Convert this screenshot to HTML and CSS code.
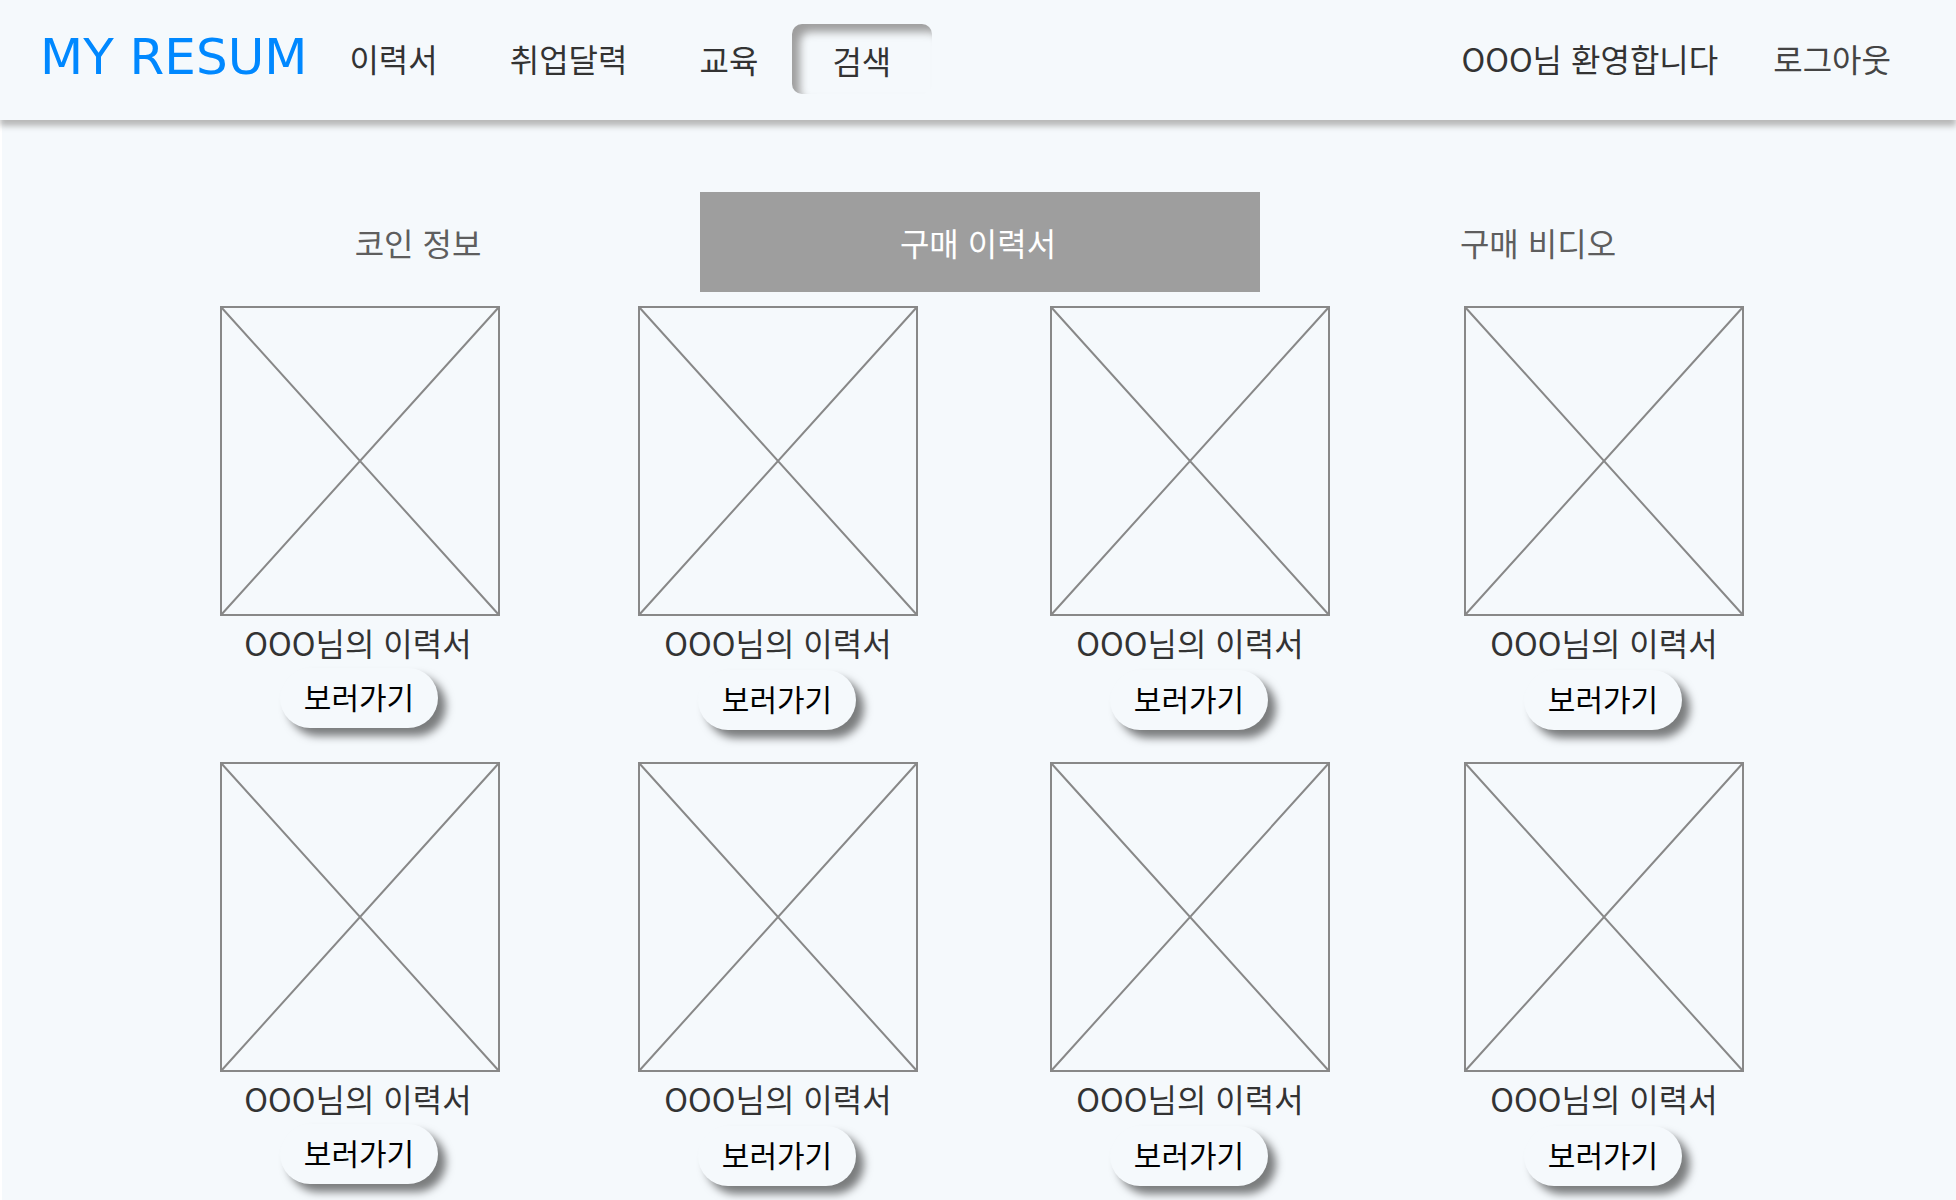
FILE: index.html
```html
<!DOCTYPE html>
<html lang="ko">
<head>
<meta charset="utf-8">
<title>MY RESUM</title>
<link rel="stylesheet" href="styles.css">
</head>
<body>
<header class="header">
  <a class="logo" href="#">MY RESUM</a>
  <nav class="menu">
    <a href="#">이력서</a>
    <a href="#">취업달력</a>
    <a class="lower" href="#">교육</a>
    <a class="lower pressed" href="#">검색</a>
  </nav>
  <div class="account">
    <span>OOO님 환영합니다</span>
    <a class="logout" href="#">로그아웃</a>
  </div>
</header>
<main class="page">
  <nav class="tabs">
    <a href="#">코인 정보</a>
    <a class="active" href="#" aria-current="page">구매 이력서</a>
    <a href="#">구매 비디오</a>
  </nav>
  <section class="cards">
    <article class="card first">
      <svg class="thumb" viewBox="0 0 280 310" aria-hidden="true"><rect x="1" y="1" width="278" height="308"/><path d="M1 1L279 309M279 1L1 309"/></svg>
      <h2>OOO님의 이력서</h2>
      <button type="button">보러가기</button>
    </article>
    <article class="card">
      <svg class="thumb" viewBox="0 0 280 310" aria-hidden="true"><rect x="1" y="1" width="278" height="308"/><path d="M1 1L279 309M279 1L1 309"/></svg>
      <h2>OOO님의 이력서</h2>
      <button type="button">보러가기</button>
    </article>
    <article class="card">
      <svg class="thumb" viewBox="0 0 280 310" aria-hidden="true"><rect x="1" y="1" width="278" height="308"/><path d="M1 1L279 309M279 1L1 309"/></svg>
      <h2>OOO님의 이력서</h2>
      <button type="button">보러가기</button>
    </article>
    <article class="card">
      <svg class="thumb" viewBox="0 0 280 310" aria-hidden="true"><rect x="1" y="1" width="278" height="308"/><path d="M1 1L279 309M279 1L1 309"/></svg>
      <h2>OOO님의 이력서</h2>
      <button type="button">보러가기</button>
    </article>
    <article class="card first">
      <svg class="thumb" viewBox="0 0 280 310" aria-hidden="true"><rect x="1" y="1" width="278" height="308"/><path d="M1 1L279 309M279 1L1 309"/></svg>
      <h2>OOO님의 이력서</h2>
      <button type="button">보러가기</button>
    </article>
    <article class="card">
      <svg class="thumb" viewBox="0 0 280 310" aria-hidden="true"><rect x="1" y="1" width="278" height="308"/><path d="M1 1L279 309M279 1L1 309"/></svg>
      <h2>OOO님의 이력서</h2>
      <button type="button">보러가기</button>
    </article>
    <article class="card">
      <svg class="thumb" viewBox="0 0 280 310" aria-hidden="true"><rect x="1" y="1" width="278" height="308"/><path d="M1 1L279 309M279 1L1 309"/></svg>
      <h2>OOO님의 이력서</h2>
      <button type="button">보러가기</button>
    </article>
    <article class="card">
      <svg class="thumb" viewBox="0 0 280 310" aria-hidden="true"><rect x="1" y="1" width="278" height="308"/><path d="M1 1L279 309M279 1L1 309"/></svg>
      <h2>OOO님의 이력서</h2>
      <button type="button">보러가기</button>
    </article>
  </section>
</main>
</body>
</html>
```

FILE: styles.css
```css
* { box-sizing: border-box; }

body {
  margin: 0;
  background: #fff;
  color: #333;
  font-family: "Noto Sans CJK KR", sans-serif;
  font-size: 32px;
  line-height: 48px;
}

a { color: inherit; text-decoration: none; }

.header {
  display: flex;
  align-items: center;
  height: 120px;
  padding: 0 65px 2px 40px;
  position: relative;
  background: #f5f9fc;
  box-shadow: 0 6px 6px #b8b8b8;
}

.logo {
  color: #08f;
  font-family: "DejaVu Sans", sans-serif;
  font-size: 50px;
  padding-bottom: 4px;
}

.menu { display: flex; align-items: center; margin-left: 42px; }
.menu a { margin-right: 72px; padding-bottom: 2px; }
.menu .lower { padding-bottom: 0; margin-right: 34px; }
.menu .pressed {
  width: 140px;
  height: 70px;
  padding: 12px 0 0 40px;
  margin: 0;
  border-radius: 10px;
  box-shadow: inset 8px 8px 8px #9e9e9e;
}

.account { display: flex; gap: 55px; margin-left: auto; padding-bottom: 2px; }
.logout { color: #444; }

.page {
  margin-left: 2px;
  padding: 72px 136px 14px 138px;
  background: #f5f9fc;
}

.tabs {
  display: grid;
  grid-template-columns: repeat(3, 1fr);
  line-height: 100px;
  text-align: center;
  color: #5e5e5e;
}
.tabs a { padding-right: 4px; }
.tabs .active { background: #9e9e9e; color: #fff; }

.cards {
  display: grid;
  grid-template-columns: 418fr 412fr 414fr 280px;
  row-gap: 32px;
  padding: 14px 76px 0 80px;
}

.card {
  display: flex;
  flex-direction: column;
  align-items: center;
  width: 280px;
}
.thumb { display: block; width: 280px; fill: none; stroke: #888; stroke-width: 2; }
.card h2 { margin: 2px 0 4px; font-size: 32px; font-weight: 400; }
.first h2 { margin-bottom: 2px; padding-right: 4px; }

.card button {
  width: 158px;
  height: 60px;
  margin: 0 2px 0 0;
  border: 0;
  border-radius: 30px;
  background: #f5f9fc;
  color: #000;
  font: 30px/56px "Noto Sans CJK KR", sans-serif;
  padding: 0 0 4px;
  box-shadow: 8px 8px 8px rgba(0, 0, 0, 0.5);
}
```
